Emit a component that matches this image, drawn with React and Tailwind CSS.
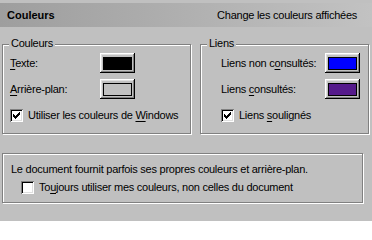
import React from "react";

function Check({ checked }) {
  return (
    <span className="relative inline-block w-[13px] h-[13px] shrink-0 bg-white shadow-[inset_1px_1px_0_#808080,inset_-1px_-1px_0_#fff,inset_2px_2px_0_#000,inset_-2px_-2px_0_#dfdfdf]">
      {checked && (
        <svg
          width="7"
          height="7"
          viewBox="0 0 7 7"
          shapeRendering="crispEdges"
          className="absolute left-[3px] top-[3px]"
        >
          <path
            fill="#000"
            d="M6 0h1v1h-1z M5 1h2v1h-2z M0 2h1v1h-1z M4 2h3v1h-3z M0 3h2v1h-2z M3 3h3v1h-3z M0 4h5v1h-5z M1 5h3v1h-3z M2 6h1v1h-1z"
          />
        </svg>
      )}
    </span>
  );
}

function ColorButton({ swatch }) {
  return (
    <span className="flex w-[35px] h-[20px] items-center justify-center bg-[#c0c0c0] shadow-[inset_-1px_-1px_0_#000,inset_1px_1px_0_#fff,inset_-2px_-2px_0_#808080,inset_2px_2px_0_#dfdfdf]">
      <span className={`block w-[29px] h-[13px] border border-black ${swatch}`} />
    </span>
  );
}

function U({ children }) {
  return <span className="underline underline-offset-[2px]">{children}</span>;
}

export default function App() {
  return (
    <div className="w-[372px] h-[221px] overflow-hidden bg-[#c0c0c0] text-black text-[11px] leading-[13px] tracking-[-0.25px] font-['Liberation_Sans',Arial,sans-serif]">
      <div className="mt-[3px] h-[24px] flex items-center justify-between pl-[7px] pr-[15px] bg-linear-to-r from-[#9e9e9e] to-[#c2c2c2]">
        <span className="font-bold tracking-normal">Couleurs</span>
        <span>Change les couleurs affichées</span>
      </div>

      <div className="mt-[17px] flex pl-[2px] gap-[9px]">
        <div className="relative w-[189px] h-[90px] border border-[#808080] shadow-[inset_1px_1px_0_#fff,1px_1px_0_#fff] pt-[8px] pl-[7px]">
          <span className="absolute left-[6px] top-[-8px] px-[2px] bg-[#c0c0c0]">Couleurs</span>
          <div className="flex items-center h-[20px]">
            <span className="w-[90px]">
              <U>T</U>exte:
            </span>
            <ColorButton swatch="bg-black" />
          </div>
          <div className="mt-[6px] flex items-center h-[20px]">
            <span className="w-[90px]">
              <U>A</U>rrière-plan:
            </span>
            <ColorButton swatch="bg-[#c0c0c0]" />
          </div>
          <div className="mt-[10px] flex items-center h-[13px] gap-[5px]">
            <Check checked />
            <span>
              Utiliser les couleurs de <U>W</U>indows
            </span>
          </div>
        </div>

        <div className="relative w-[169px] h-[90px] border border-[#808080] shadow-[inset_1px_1px_0_#fff,1px_1px_0_#fff] pt-[8px] pl-[20px]">
          <span className="absolute left-[6px] top-[-8px] px-[2px] bg-[#c0c0c0]">Liens</span>
          <div className="flex items-center h-[20px]">
            <span className="w-[104px]">
              Liens non c<U>o</U>nsultés:
            </span>
            <ColorButton swatch="bg-[#0000ff]" />
          </div>
          <div className="mt-[6px] flex items-center h-[20px]">
            <span className="w-[104px]">
              Liens <U>c</U>onsultés:
            </span>
            <ColorButton swatch="bg-[#551a8b]" />
          </div>
          <div className="mt-[10px] flex items-center h-[13px] gap-[5px]">
            <Check checked />
            <span>
              Liens <U>s</U>oulignés
            </span>
          </div>
        </div>
      </div>

      <div className="mt-[19px] ml-[2px] w-[361px] h-[50px] border border-[#808080] shadow-[inset_1px_1px_0_#fff,1px_1px_0_#fff] pt-[9px] pl-[8px]">
        <div>Le document fournit parfois ses propres couleurs et arrière-plan.</div>
        <div className="mt-[5px] ml-[10px] flex items-center h-[13px] gap-[5px]">
          <Check />
          <span>
            To<U>u</U>jours utiliser mes couleurs, non celles du document
          </span>
        </div>
      </div>
    </div>
  );
}
